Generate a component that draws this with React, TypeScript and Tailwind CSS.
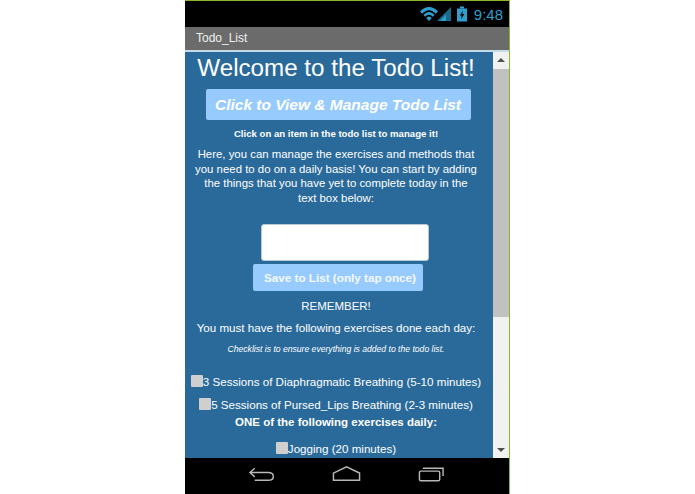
import type { ReactNode } from 'react'

function Exercise({ children, className }: { children: ReactNode; className: string }) {
  return (
    <p className={`text-[11.600px] leading-[14px] text-center ${className}`}>
      <span className="inline-block h-[12px] w-[12px] translate-y-[-2px] rounded-[1px] bg-[#cfcfcf] align-middle" />
      {children}
    </p>
  )
}

function StatusIcons() {
  return (
    <svg width="47" height="16" viewBox="0 0 47 16" className="mr-[7px]">
      <path d="M0 5.500C5-.5 13-.5 18 5.500L15.800 7.800C11.500 3 6.500 3 2.200 7.800Z" fill="#2f9fd0" />
      <path d="M3.500 9C7 5 11 5 14.500 9L12.800 10.800C10.500 8 7.500 8 5.200 10.800Z" fill="#2f9fd0" />
      <path d="M6.200 12C8 10 10 10 11.800 12L9 15Z" fill="#2f9fd0" />
      <path d="M17 15L31 1V15Z" fill="#1c6a8c" />
      <path d="M20 15L26 8.500V15Z" fill="#2f9fd0" />
      <rect x="37" y="2.500" width="10" height="13" fill="#2f9fd0" />
      <rect x="40" y="0.500" width="4" height="2" fill="#2f9fd0" />
      <path d="M43 4.500L39.800 9.500H41.700L41 13.500L44.300 8H42.200Z" fill="#000" />
    </svg>
  )
}

function Scrollbar() {
  return (
    <div className="flex w-[16px] shrink-0 flex-col items-center bg-[#f1f1f1]">
      <div className="mt-[6px] h-0 w-0 border-x-[4px] border-b-[4px] border-x-transparent border-b-[#505050]" />
      <div className="mt-[7px] h-[248px] w-full bg-[#c1c1c1]" />
      <div className="mt-auto mb-[6px] h-0 w-0 border-x-[4px] border-t-[4px] border-x-transparent border-t-[#505050]" />
    </div>
  )
}

function NavBar() {
  return (
    <div className="flex h-[36px] shrink-0 items-start justify-center gap-[57px] bg-black pt-[7px] pr-[1px]">
      <svg width="27" height="18" viewBox="0 0 28 18" fill="none" stroke="#b8b8b8" strokeWidth="1.500">
        <path d="M7 3L2 7.500L7 12" />
        <path d="M2 7.500H21C28 7.500 28 15.500 21 15.500H7" />
      </svg>
      <svg width="29" height="18" viewBox="0 0 30 18" fill="none" stroke="#b8b8b8" strokeWidth="1.500">
        <path d="M1.500 8L15 1.500L28.500 8V15.500H1.500Z" />
      </svg>
      <svg width="27" height="18" viewBox="0 0 28 18" fill="none" stroke="#b8b8b8" strokeWidth="1.500">
        <rect x="1.500" y="6" width="21" height="10" rx="1.500" />
        <path d="M5 3H26V11" />
      </svg>
    </div>
  )
}

export default function App() {
  return (
    <div className="h-[494px] w-[695px] overflow-hidden bg-white font-['Liberation_Sans',Arial,sans-serif]">
      <div className="ml-[185px] flex h-[494px] w-[325px] flex-col border-t border-r border-[#8fb52c]">
        <div className="flex h-[26px] shrink-0 items-center justify-end bg-black">
          <StatusIcons />
          <span className="mr-[6px] text-[15px] leading-none text-[#2f9fd0]">9:48</span>
        </div>
        <div className="flex h-[23px] shrink-0 items-center bg-[#6b6b6b] pb-[2px] pl-[11px] text-[12px] text-[#f0f0f0]">
          Todo_List
        </div>
        <div className="flex min-h-0 flex-1 border-t-2 border-[#c6dbe8]">
          <main className="min-w-0 flex-1 overflow-hidden bg-[#2a6a9b] pr-[6px] text-center text-white">
            <h1 className="mt-[2px] text-[24.200px] leading-[28px]">Welcome to the Todo List!</h1>
            <div className="mx-auto mt-[7px] flex h-[31px] w-[265px] translate-x-[2px] items-center justify-center rounded-[2px] bg-[#97cbfd] text-[15.500px] font-bold italic">
              Click to View &amp; Manage Todo List
            </div>
            <p className="mt-[7px] text-[9.600px] font-bold leading-[14px]">
              Click on an item in the todo list to manage it!
            </p>
            <p className="mx-auto mt-[6px] w-[283px] text-[11.400px] leading-[14.500px]">
              Here, you can manage the exercises and methods that you need to do on a daily basis! You can start by adding the things that you have yet to complete today in the text box below:
            </p>
            <div className="mx-auto mt-[19px] h-[37px] w-[168px] translate-x-[9px] rounded-[3px] border border-[#b8cad8] bg-white" />
            <div className="mx-auto mt-[3px] flex h-[27px] w-[170px] translate-x-[2px] items-center justify-center rounded-[2px] bg-[#97cbfd] pl-[4px] text-[11.700px] font-bold text-[#f4f9ff]">
              Save to List (only tap once)
            </div>
            <p className="mt-[8px] text-[11.500px] leading-[14px]">REMEMBER!</p>
            <p className="mt-[8px] text-[11.600px] leading-[14px]">You must have the following exercises done each day:</p>
            <p className="mt-[8px] text-[8.600px] italic leading-[12px]">
              Checklist is to ensure everything is added to the todo list.
            </p>
            <Exercise className="mt-[20px]">3 Sessions of Diaphragmatic Breathing (5-10 minutes)</Exercise>
            <Exercise className="mt-[9px]">5 Sessions of Pursed_Lips Breathing (2-3 minutes)</Exercise>
            <p className="mt-[3px] text-[11.500px] font-bold leading-[14px]">ONE of the following exercises daily:</p>
            <Exercise className="mt-[13px]">Jogging (20 minutes)</Exercise>
          </main>
          <Scrollbar />
        </div>
        <NavBar />
      </div>
    </div>
  )
}
